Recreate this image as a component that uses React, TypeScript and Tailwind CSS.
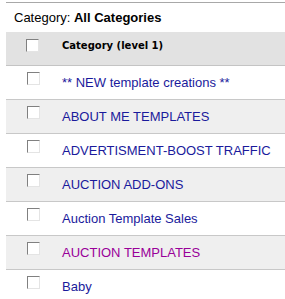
const rows = [
  { name: '** NEW template creations **', shaded: false },
  { name: 'ABOUT ME TEMPLATES', shaded: true },
  { name: 'ADVERTISMENT-BOOST TRAFFIC', shaded: false },
  { name: 'AUCTION ADD-ONS', shaded: true },
  { name: 'Auction Template Sales', shaded: false },
  { name: 'AUCTION TEMPLATES', shaded: true, visited: true },
  { name: 'Baby', shaded: false },
];

function Box() {
  return (
    <span className="block w-[13px] h-[13px] bg-white border border-t-[#808080] border-l-[#808080] border-b-[#e4e4e4] border-r-[#e4e4e4]" />
  );
}

export default function App() {
  return (
    <div className="w-[285px] h-[299px] overflow-hidden bg-white pt-[2px] pl-[6px] font-['Liberation_Sans',Arial,sans-serif]">
      <div className="border-t border-[#a8a8a8] h-[30px] flex items-center pl-[8px] text-[13px] text-black">
        Category:&nbsp;<b>All Categories</b>
      </div>

      {/* header */}
      <div className="flex h-[34px] bg-[#e2e2e2] border-b border-[#c4c4c4]">
        <div className="w-[56px] pl-[20px] pt-[7px] shrink-0">
          <Box />
        </div>
        <div className="pt-[6px] text-[10px] font-bold text-black font-['DejaVu_Sans',Verdana,sans-serif]">
          Category (level 1)
        </div>
      </div>

      {rows.map((r) => (
        <div
          key={r.name}
          className={`flex h-[34px] border-b border-[#c8c8c8] ${r.shaded ? 'bg-[#efefef]' : 'bg-white'}`}
        >
          <div className="w-[56px] pl-[21px] pt-[6px] shrink-0">
            <Box />
          </div>
          <div
            className={`flex items-center text-[13px] whitespace-nowrap ${r.visited ? 'text-[#990099]' : 'text-[#1a1a9c]'}`}
          >
            {r.name}
          </div>
        </div>
      ))}
    </div>
  );
}
